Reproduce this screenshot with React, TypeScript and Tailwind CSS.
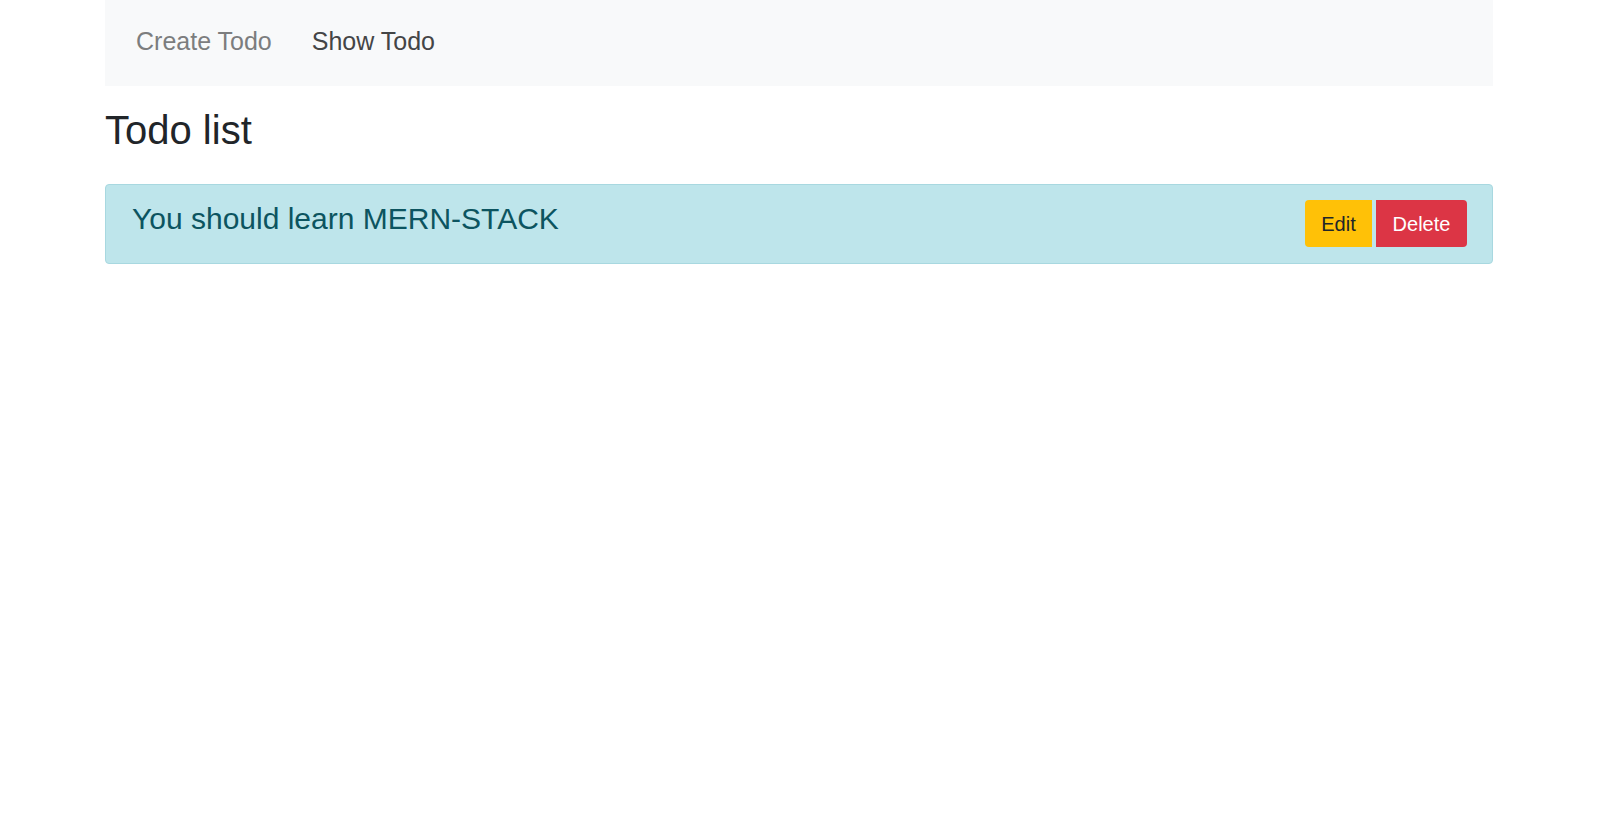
import React from "react";

export default function App() {
  return (
    <div className="min-h-screen bg-white" style={{ fontFamily: '"Liberation Sans", Arial, sans-serif' }}>
      <div className="mx-auto w-[1388px]">
        <nav className="flex h-[86px] items-start bg-[#f8f9fa] pl-[11px] pt-[23px]">
          <a className="px-[20px] text-[25px] leading-[36px] text-[#7c7d7e]" href="#">
            Create Todo
          </a>
          <a className="px-[20px] text-[25px] leading-[36px] text-[#444546]" href="#">
            Show Todo
          </a>
        </nav>
        <h3 className="mt-[21px] text-[40px] font-normal leading-[46px] text-[#212529]">Todo list</h3>
        <div className="mt-[31px] flex items-start justify-between rounded-[4px] border border-[#a8d8e0] bg-[#bee5eb] pb-[16px] pl-[26px] pr-[25px] pt-[15px]">
          <h5 className="mt-[1px] text-[30px] font-normal leading-[36px] text-[#0c5460]">
            You should learn MERN-STACK
          </h5>
          <div className="flex gap-[4px]">
            <button className="flex h-[47px] w-[67px] items-center justify-center rounded-l-[4px] bg-[#ffc107] text-[20px] text-[#212529]">
              Edit
            </button>
            <button className="flex h-[47px] w-[91px] items-center justify-center rounded-r-[4px] bg-[#dc3545] text-[20px] text-white">
              Delete
            </button>
          </div>
        </div>
      </div>
    </div>
  );
}
